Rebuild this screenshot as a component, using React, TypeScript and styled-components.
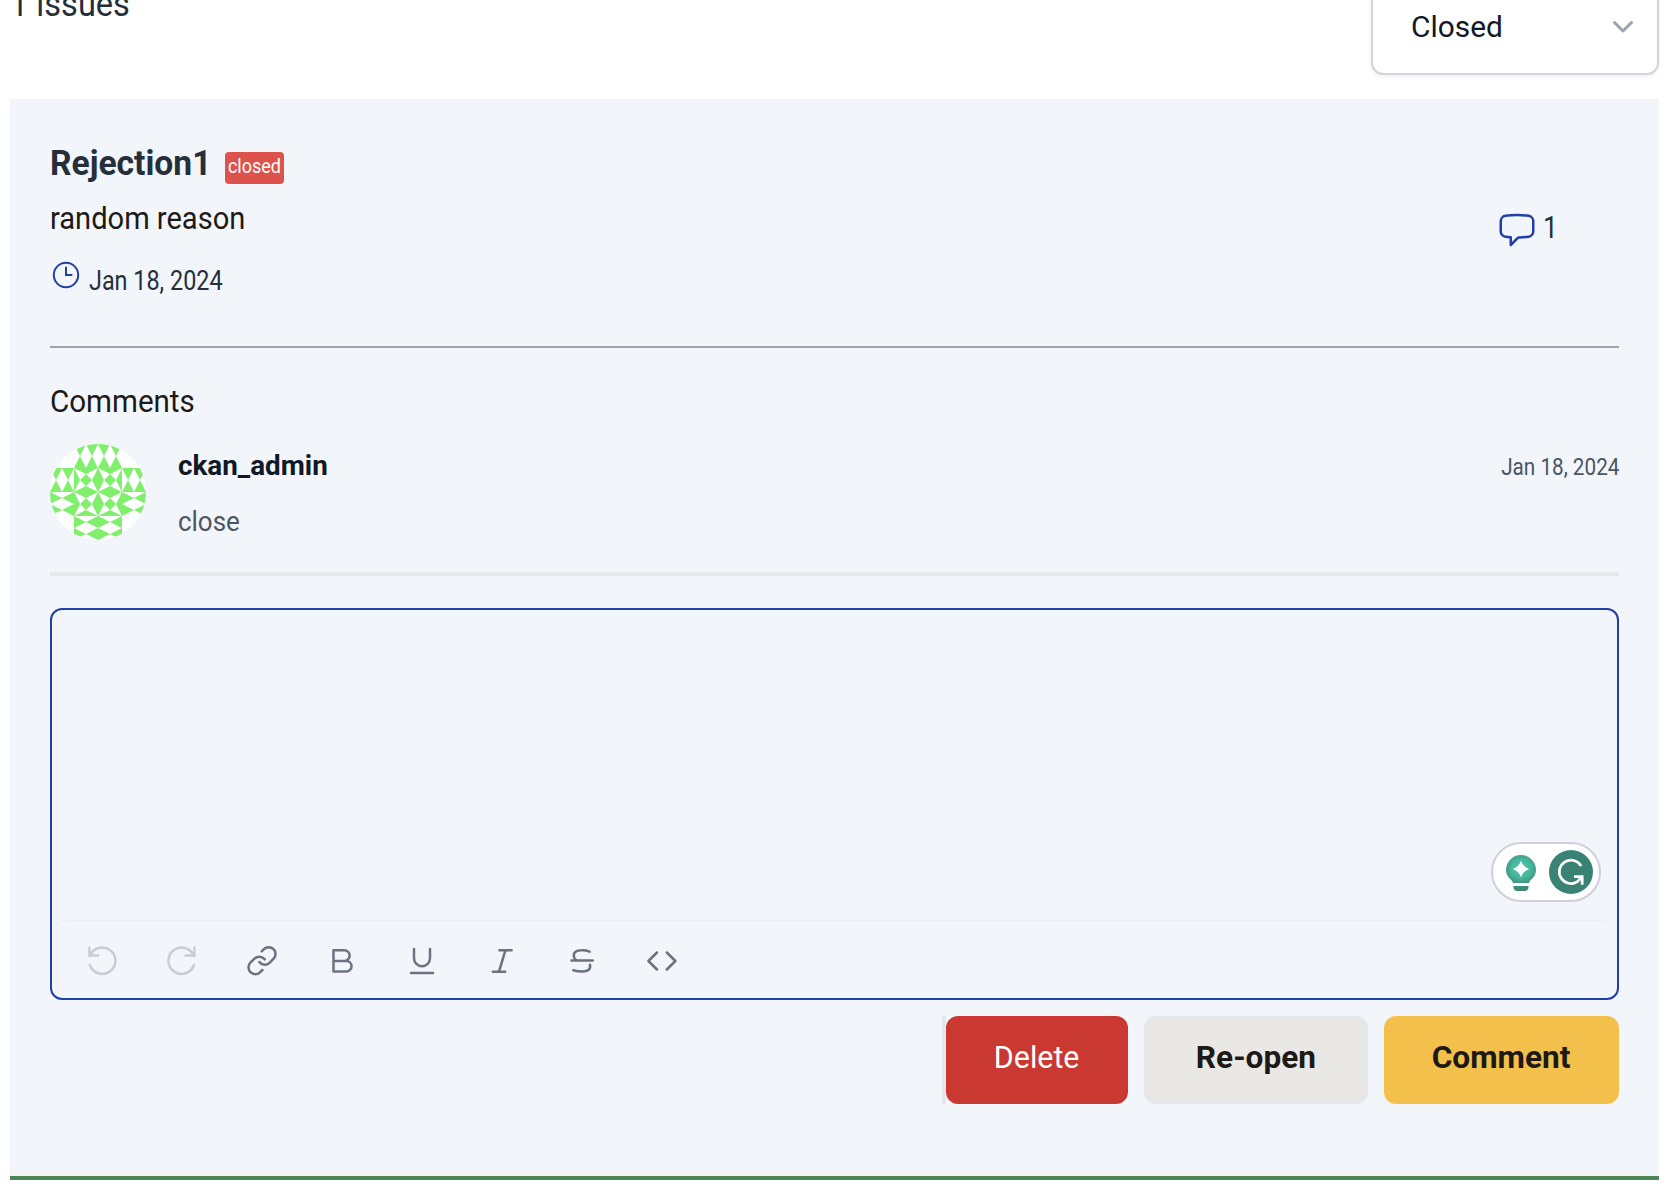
import React from 'react';
import styled, { createGlobalStyle } from 'styled-components';

const GlobalStyle = createGlobalStyle`
  *, *::before, *::after { box-sizing: border-box; }
  body {
    margin: 0;
    background: #fff;
    font-family: Roboto, "Liberation Sans", Arial, sans-serif;
    overflow: hidden;
  }
  svg { display: block; flex: none; }
`;

/* Text with adjustable glyph width; $from sets the side that stays in place. */
const Text = styled.span<{
  $size: number;
  $line: number;
  $scale?: number;
  $from?: 'left' | 'center' | 'right';
  $color?: string;
  $bold?: boolean;
}>`
  display: block;
  white-space: nowrap;
  font-size: ${(p) => p.$size}px;
  line-height: ${(p) => p.$line}px;
  font-weight: ${(p) => (p.$bold ? 700 : 400)};
  color: ${(p) => p.$color ?? '#1c1917'};
  transform: scaleX(${(p) => p.$scale ?? 1});
  transform-origin: ${(p) => p.$from ?? 'left'} center;
`;

const Page = styled.main`
  display: flex;
  flex-direction: column;
  width: 1678px;
  height: 1200px;
  padding: 0 19px 0 10px;
`;

const Header = styled.header`
  display: flex;
  justify-content: space-between;
  height: 75px;
  margin-bottom: 24px;
`;

const IssueCount = styled.div`
  width: 140px;
  margin: -19px 0 0 0;
`;

const Select = styled.div`
  display: flex;
  align-items: center;
  justify-content: space-between;
  width: 288px;
  height: 98px;
  margin-top: -23px;
  padding: 1px 23px 0 38px;
  border: 2px solid #d1d5db;
  border-radius: 12px;
  background: #fff;
  box-shadow: 0 2px 4px rgba(0, 0, 0, 0.05);
`;

const Panel = styled.section`
  height: 1081px;
  padding: 43px 40px 0;
  background: #f2f5fa;
  border-bottom: 4px solid #4d8654;
`;

const Issue = styled.div`
  display: flex;
  justify-content: space-between;
  height: 206px;
  border-bottom: 2px solid #9ca3af;
`;

const TitleRow = styled.div`
  display: flex;
  align-items: flex-end;
  height: 42px;
  margin-bottom: 13px;
`;

const TitleBox = styled.div`
  width: 175px;
  height: 42px;
  padding-top: 2px;
`;

const Badge = styled.div`
  display: flex;
  justify-content: center;
  width: 59px;
  height: 32px;
  border-radius: 4px;
  background: #de524c;
`;

const DateRow = styled.div`
  display: flex;
  gap: 9px;
  margin: 20px 0 0 2px;
`;

const CountBox = styled.div`
  display: flex;
  align-items: flex-start;
  gap: 6px;
  width: 122px;
  height: 40px;
  margin-top: 68px;
`;

const Heading = styled.h2`
  margin: 32px 0 20px;
`;

const CommentItem = styled.article`
  display: flex;
  height: 132px;
  border-bottom: 4px solid #e5e7eb;
`;

const CommentBody = styled.div`
  display: flex;
  flex-direction: column;
  gap: 16px;
  flex: 1;
  margin-left: 32px;
  padding-top: 2px;
`;

const CommentDate = styled.div`
  padding-top: 4px;
`;

const Editor = styled.div`
  position: relative;
  height: 392px;
  margin-top: 32px;
  border: 2px solid #2040a8;
  border-radius: 12px;
`;

const TextArea = styled.div`
  height: 310px;
`;

const Toolbar = styled.div`
  display: flex;
  align-items: center;
  gap: 48px;
  height: 78px;
  margin: 0 2px;
  padding: 2px 32px 0;
  border-top: 2px solid #edf0f4;
  border-radius: 12px;
`;

const ToolIcon = styled.svg<{ $muted?: boolean }>`
  width: 32px;
  height: 32px;
  overflow: visible;
  fill: none;
  stroke: ${(p) => (p.$muted ? '#c9cdd3' : '#6b7280')};
  stroke-width: 2.5;
  stroke-linecap: round;
  stroke-linejoin: round;
`;

const Assistant = styled.div`
  position: absolute;
  right: 16px;
  top: 232px;
  display: flex;
  align-items: center;
  justify-content: space-between;
  width: 110px;
  height: 60px;
  padding: 0 6px 0 13px;
  border: 2px solid #cfd0dd;
  border-radius: 30px;
  background: #fff;
`;

const BulbSlot = styled.div`
  padding-top: 2px;
`;

const Actions = styled.div`
  display: flex;
  justify-content: flex-end;
  gap: 16px;
  margin-top: 16px;
`;

const DeleteSlot = styled.div`
  border-left: 4px solid #e5e7eb;
`;

const Button = styled.button<{ $bg: string; $edge?: string; $width: number }>`
  display: flex;
  align-items: flex-start;
  justify-content: center;
  width: ${(p) => p.$width}px;
  height: 88px;
  padding: 0;
  border: 4px solid ${(p) => p.$edge ?? p.$bg};
  border-radius: 12px;
  background: ${(p) => p.$bg};
  font-family: inherit;
`;

const GREEN = '#80ef6b';

const VERTICAL = 'M0 0H12L6 12ZM12 0H24L18 12ZM0 24H12L6 12ZM12 24H24L18 12Z';
const SIDEWAYS = 'M0 0V12L12 6ZM0 12V24L12 18ZM24 0V12L12 6ZM24 12V24L12 18Z';
const STAR = 'M0 0L12 6L6 12ZM24 0L12 6L18 12ZM0 24L6 12L12 18ZM24 24L18 12L12 18Z';

const tiles: [number, number, string][] = [
  [1, 0, VERTICAL], [2, 0, VERTICAL], [0, 1, VERTICAL], [3, 1, VERTICAL],
  [0, 2, SIDEWAYS], [3, 2, SIDEWAYS], [1, 3, SIDEWAYS], [2, 3, SIDEWAYS],
];
const stars: [number, number][] = [[1, 1], [2, 1], [1, 2], [2, 2]];

const Avatar = () => (
  <svg width="96" height="96" viewBox="0 0 96 96">
    <clipPath id="avatar-round"><circle cx="48" cy="48" r="48" /></clipPath>
    <g clipPath="url(#avatar-round)">
      <rect width="96" height="96" fill="#fff" />
      {tiles.map(([x, y, d]) => (
        <path key={`${x}-${y}`} d={d} fill={GREEN} transform={`translate(${x * 24} ${y * 24})`} />
      ))}
      <rect x="24" y="24" width="48" height="48" fill={GREEN} />
      {stars.map(([x, y]) => (
        <path key={`${x}-${y}`} d={STAR} fill="#fff" transform={`translate(${x * 24} ${y * 24})`} />
      ))}
    </g>
  </svg>
);

const tools: { name: string; muted?: boolean; node: React.ReactNode }[] = [
  { name: 'Undo', muted: true, node: <path d="M3.4 2.4V10.6H12.2M3.9 11.1A13.2 13.2 0 1 1 3.8 20" /> },
  { name: 'Redo', muted: true, node: <path d="M28.4 2.4V10.6H19.6M27.9 11.1A13.2 13.2 0 1 0 28 20" /> },
  {
    name: 'Link',
    node: (
      <g transform="translate(-.3 -.6) scale(1.36)" strokeWidth="1.84">
        <path d="M10 13a5 5 0 0 0 7.54.54l3-3a5 5 0 0 0-7.07-7.07l-1.72 1.71" />
        <path d="M14 11a5 5 0 0 0-7.54-.54l-3 3a5 5 0 0 0 7.07 7.07l1.71-1.71" />
      </g>
    ),
  },
  { name: 'Bold', node: <path d="M7.5 5.2h10.8a5.4 5.4 0 0 1 0 10.8H7.5M20.3 16a5.25 5.25 0 0 1 0 10.5H7.5V5.2M18 16h2.3" /> },
  { name: 'Underline', node: <path d="M8 4v9.2a8 8 0 0 0 16 0V4M5 28h22" /> },
  { name: 'Italic', node: <path d="M13.4 5.3h12.2M6.8 26.7h12.4M19.4 5.3L13 26.7" /> },
  {
    name: 'Strikethrough',
    node: <path d="M5.5 15.4h21.3M23.6 6.6C21 5.6 18.2 5.2 15.5 5.3C10 5.3 7.8 7.3 7.8 10.6c0 2 1 3.6 2.6 4.7M24 19.8c1 4.2-1.8 6.8-7.5 6.8-4 0-6.6-.5-9.2-1.4" />,
  },
  { name: 'Code', node: <path d="M11 7.5L2.4 16L11 24.5M20.8 7.5L29.4 16L20.8 24.5" /> },
];

export default function App() {
  return (
    <>
      <GlobalStyle />
      <Page>
        <Header>
          <IssueCount>
            <Text $size={35} $line={48} $scale={0.93} $color="#252f3a">1 issues</Text>
          </IssueCount>
          <Select>
            <Text $size={29} $line={40} $scale={1.03} $color="#111827">Closed</Text>
            <svg width="22" height="14" viewBox="0 0 22 14" fill="none" stroke="#9ca3af" strokeWidth="3" strokeLinecap="round" strokeLinejoin="round">
              <path d="M2.5 2.5L11 11L19.5 2.5" />
            </svg>
          </Select>
        </Header>

        <Panel>
          <Issue>
            <div>
              <TitleRow>
                <TitleBox>
                  <Text $size={35} $line={40} $scale={0.96} $color="#252f3a" $bold>Rejection1</Text>
                </TitleBox>
                <Badge>
                  <Text $size={20} $line={28} $scale={0.9} $from="center" $color="#fff">closed</Text>
                </Badge>
              </TitleRow>
              <Text $size={31} $line={44} $scale={0.938}>random reason</Text>
              <DateRow>
                <svg width="28" height="28" viewBox="0 0 28 28" fill="none" stroke="#2040a8" strokeWidth="2" strokeLinecap="round">
                  <circle cx="14" cy="14" r="12.2" />
                  <path d="M14 6.5V14H19.6" />
                </svg>
                <Text $size={27} $line={40} $scale={0.866} $color="#252f3a">Jan 18, 2024</Text>
              </DateRow>
            </div>
            <CountBox>
              <svg width="40" height="40" viewBox="0 0 24 24" fill="none" stroke="#2040a8" strokeWidth="1.5" strokeLinejoin="round">
                <path d="M2.25 12.76c0 1.6 1.123 2.994 2.707 3.227 1.087.16 2.185.283 3.293.369V21l4.076-4.076a1.526 1.526 0 0 1 1.037-.443 48.282 48.282 0 0 0 5.68-.494c1.584-.233 2.707-1.626 2.707-3.228V6.741c0-1.602-1.123-2.995-2.707-3.228A48.394 48.394 0 0 0 12 3c-2.392 0-4.744.175-7.043.513C3.373 3.746 2.25 5.14 2.25 6.741v6.018z" />
              </svg>
              <Text $size={31} $line={36} $scale={0.85} $color="#252f3a">1</Text>
            </CountBox>
          </Issue>

          <Heading>
            <Text $size={31} $line={44} $scale={0.953}>Comments</Text>
          </Heading>

          <CommentItem>
            <Avatar />
            <CommentBody>
              <Text $size={27} $line={40} $scale={1.03} $color="#111827" $bold>ckan_admin</Text>
              <Text $size={27} $line={40} $scale={0.96} $color="#4b5563">close</Text>
            </CommentBody>
            <CommentDate>
              <Text $size={23} $line={40} $scale={0.9} $from="right" $color="#4b5563">Jan 18, 2024</Text>
            </CommentDate>
          </CommentItem>

          <Editor>
            <TextArea />
            <Toolbar>
              {tools.map((t) => (
                <ToolIcon key={t.name} viewBox="0 0 32 32" $muted={t.muted}>{t.node}</ToolIcon>
              ))}
            </Toolbar>
            <Assistant>
              <BulbSlot>
                <svg width="30" height="36" viewBox="0 0 30 36">
                  <defs>
                    <radialGradient id="bulb" cx=".5" cy=".48" r=".55">
                      <stop offset="0" stopColor="#48c9ac" />
                      <stop offset=".6" stopColor="#47b79c" />
                      <stop offset="1" stopColor="#409480" />
                    </radialGradient>
                  </defs>
                  <path d="M15 0A15 15 0 0 0 0 15C0 19.5 2.2 22.3 4.2 24C5.8 25.4 6.6 26.6 7 28H23C23.4 26.6 24.2 25.4 25.8 24C27.8 22.3 30 19.5 30 15A15 15 0 0 0 15 0Z" fill="url(#bulb)" />
                  <path d="M7.5 31H22.5V32C22.5 34.6 21 36 18.6 36H11.4C9 36 7.5 34.6 7.5 32Z" fill="#3d8a78" />
                  <path d="M15 5.8C16.8 10.2 18.8 12.2 23.2 14C18.8 15.8 16.8 17.8 15 22.2C13.2 17.8 11.2 15.8 6.8 14C11.2 12.2 13.2 10.2 15 5.8Z" fill="#fff" />
                </svg>
              </BulbSlot>
              <svg width="44" height="44" viewBox="0 0 44 44">
                <circle cx="22" cy="22" r="22" fill="#3a8274" />
                <path d="M32.1 16A11.7 11.7 0 1 0 28.4 31.6L33.2 26.6M25 26.7H33.2V34.8" fill="none" stroke="#fff" strokeWidth="2.7" />
              </svg>
            </Assistant>
          </Editor>

          <Actions>
            <DeleteSlot>
              <Button $bg="#c93932" $width={182}>
                <Text $size={31} $line={76} $scale={0.98} $from="center" $color="#fff">Delete</Text>
              </Button>
            </DeleteSlot>
            <Button $bg="#e9e8e4" $edge="#e5e7eb" $width={224}>
              <Text $size={31} $line={76} $scale={1.02} $from="center" $bold>Re-open</Text>
            </Button>
            <Button $bg="#f4c04c" $width={235}>
              <Text $size={31} $line={76} $scale={1.02} $from="center" $bold>Comment</Text>
            </Button>
          </Actions>
        </Panel>
      </Page>
    </>
  );
}
